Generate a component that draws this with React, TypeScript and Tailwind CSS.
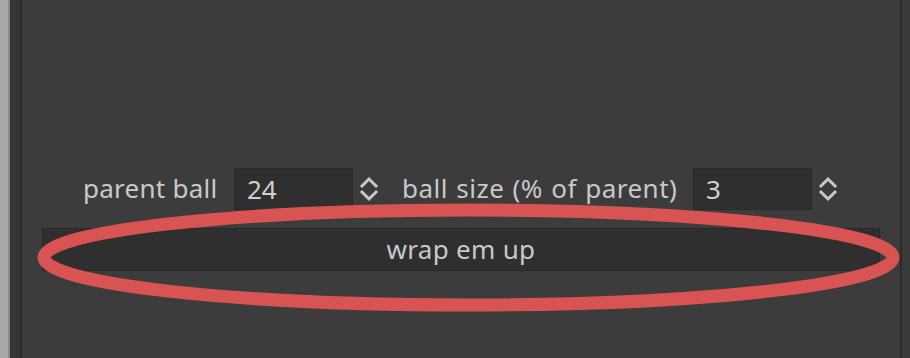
import React from "react";

function Spinner() {
  return (
    <svg width="22" height="28" viewBox="0 0 22 28" className="shrink-0">
      <path d="M4 11 L11 4 L18 11" fill="none" stroke="#c9c9c9" strokeWidth="3" strokeLinecap="square" strokeLinejoin="miter" />
      <path d="M4 17 L11 24 L18 17" fill="none" stroke="#c9c9c9" strokeWidth="3" strokeLinecap="square" strokeLinejoin="miter" />
    </svg>
  );
}

function NumField({ value }: { value: string }) {
  return (
    <div className="w-[119px] h-[42px] bg-[#2f2f2f] border border-[#2a2a2a] flex items-center pl-[12px] text-[#cfcfcf]">
      {value}
    </div>
  );
}

export default function App() {
  return (
    <div
      className="relative w-[910px] h-[358px] flex bg-[#3c3c3c] overflow-hidden text-[26px] text-[#c9c9c9]"
      style={{ fontFamily: '"Noto Sans", "DejaVu Sans", sans-serif' }}
    >
      <div className="w-[8px] bg-[#a9a9a9] shrink-0" />
      <div className="w-[2px] bg-[#8a8a8a] shrink-0" />
      <div className="w-[1px] bg-[#2b2b2b] shrink-0" />
      <div className="w-[9px] bg-[#363636] shrink-0" />
      <div className="w-[2px] bg-[#2a2a2a] shrink-0" />
      <div className="flex-1 flex flex-col justify-end px-[20px] pb-[87px]">
        <div className="flex items-center h-[42px] pl-[41px]">
          <span className="leading-none w-[133px] whitespace-nowrap tracking-[0.25px] -mt-[2px]">parent ball</span>
          <div className="ml-[18px]"><NumField value="24" /></div>
          <div className="ml-[5px]"><Spinner /></div>
          <span className="ml-[22px] leading-none w-[273px] whitespace-nowrap tracking-[0.5px] [word-spacing:1px] -mt-[2px]">ball size (% of parent)</span>
          <div className="ml-[18px]"><NumField value="3" /></div>
          <div className="ml-[5px]"><Spinner /></div>
        </div>
        <div className="mt-[18px] h-[43px] bg-[#2f2f2f] border border-[#292929] flex items-center justify-center text-[#c9c9c9] tracking-[0.3px]">
          wrap em up
        </div>
      </div>
      <div className="w-[2px] bg-[#2a2a2a] shrink-0" />
      <div className="w-[8px] bg-[#3a3a3a] shrink-0" />
      <svg className="absolute left-0 top-0 pointer-events-none" width="910" height="358" viewBox="0 0 910 358">
        <ellipse cx="468.5" cy="257.5" rx="424.5" ry="47.5" fill="none" stroke="#d75452" strokeWidth="13" />
      </svg>
    </div>
  );
}
